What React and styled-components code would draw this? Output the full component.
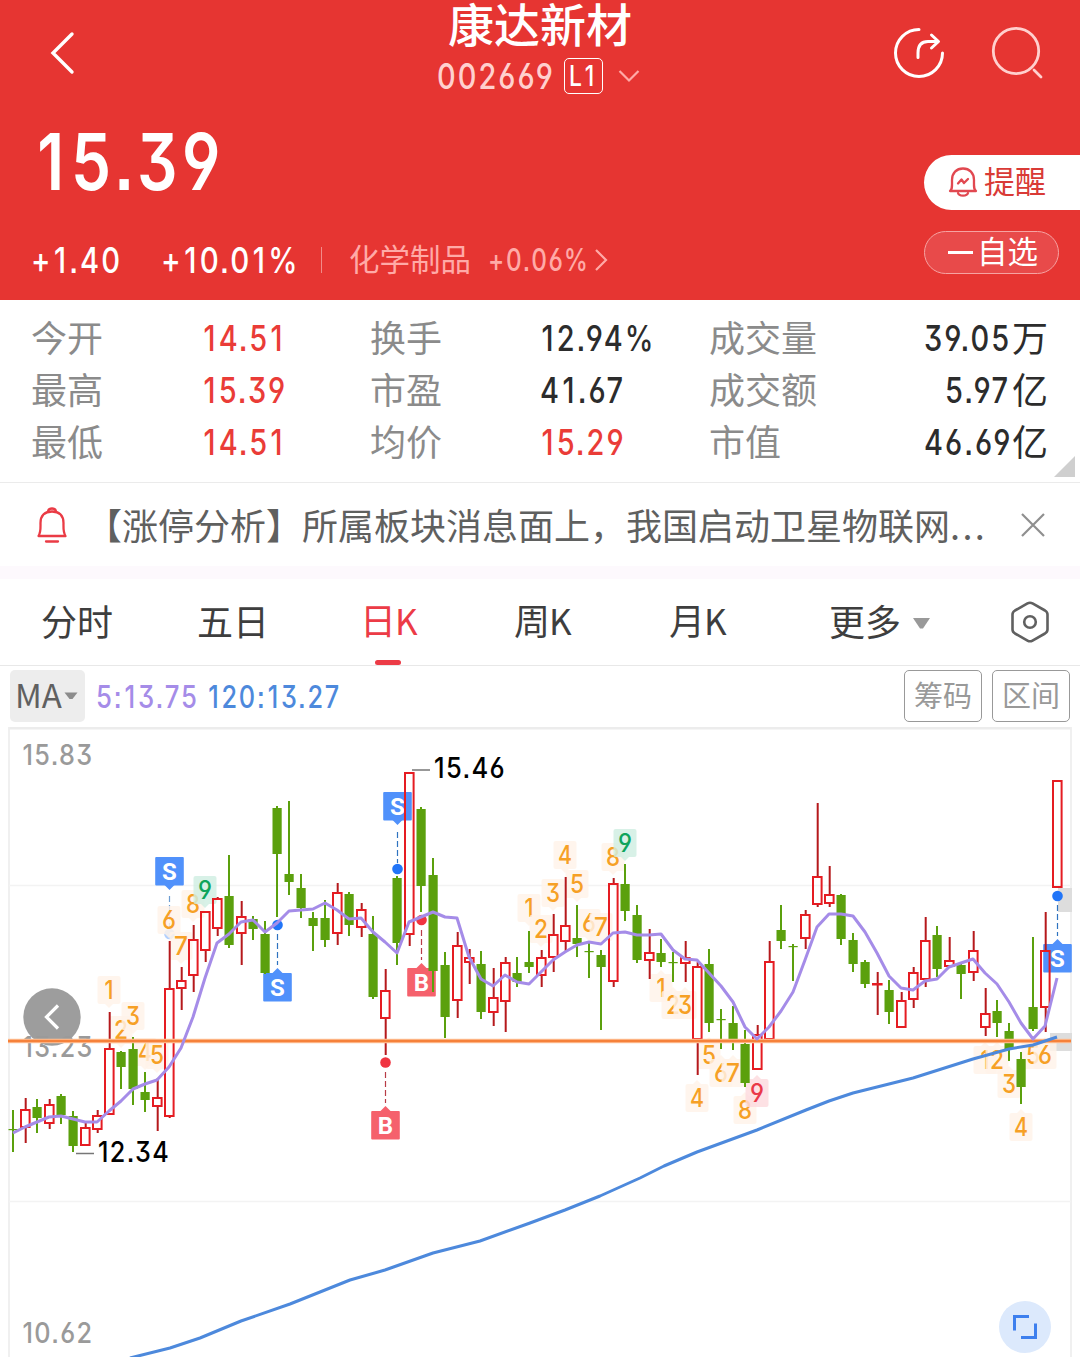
import React from "react";
import styled, { createGlobalStyle } from "styled-components";

const Global = createGlobalStyle`
  *, *::before, *::after { box-sizing: border-box; }
  html, body { margin: 0; padding: 0; background: #fff; }
  body { width: 1080px; height: 1357px; overflow: hidden; font-family: Inter, "Noto Sans CJK SC", sans-serif; }
  svg { display: block; }
`;

const Screen = styled.main`
  width: 1080px;
  height: 1357px;
  display: flex;
  flex-direction: column;
  overflow: hidden;
  background: #fff;
`;

/* Condensed figures with a flat-topped three, open six and nine, and square points. */
const NumBox = styled.span`
  display: inline-block;
  width: ${(p) => p.$w}px;
  font-family: Inter, "Noto Sans CJK SC", sans-serif;
  font-size: ${(p) => p.$size || 35.5}px;
  font-weight: ${(p) => p.$weight || 500};
  font-feature-settings: "cv03", "cv04", "cv09", "ss07";
  letter-spacing: 0.07em;
  color: ${(p) => p.$color || "inherit"};
  white-space: nowrap;
  transform: scaleX(${(p) => p.$scale || 0.815});
  transform-origin: left center;
`;

/* The one is narrower than the other figures, so it gets room on both sides. */
const One = styled.span`
  padding: 0 0.04em 0 0.05em;
`;

function Num({ children, ...rest }) {
  return (
    <NumBox {...rest}>
      {[...children].map((c, i) => (c === "1" ? <One key={i}>1</One> : c))}
    </NumBox>
  );
}

/* ---------- header ---------- */
const Header = styled.header`
  height: 300px;
  flex: none;
  background: #e63532;
  color: #fff;
  display: flex;
  flex-direction: column;
`;

const TopBar = styled.div`
  height: 106px;
  display: grid;
  grid-template-columns: 1fr auto 1fr;
  align-items: center;
  padding: 0 37px 0 50px;
`;

const TopSide = styled.div`
  display: flex;
  justify-content: ${(p) => (p.$end ? "flex-end" : "flex-start")};
  gap: 46px;
  padding-top: 3px;
`;

const TitleBlock = styled.div`
  display: flex;
  flex-direction: column;
  align-items: center;
  align-self: start;
  margin-right: 13px;
`;

const StockName = styled.h1`
  margin: 0;
  font: 500 46px/44px "Noto Sans CJK SC", sans-serif;
`;

const CodeRow = styled.div`
  display: flex;
  align-items: center;
  height: 36px;
  margin: 14px 4px 0 0;
  color: #ffd0ce;
`;

const LevelBadge = styled.span`
  width: 39px;
  height: 36px;
  margin: 0 15px 0 11px;
  border: 1.5px solid #fff;
  border-radius: 5px;
  color: #fff;
  display: flex;
  align-items: center;
  justify-content: center;
`;

const Quote = styled.div`
  flex: 1;
  display: flex;
  justify-content: space-between;
`;

const QuoteMain = styled.div`
  display: flex;
  flex-direction: column;
  padding-left: 31px;
`;

const Price = styled.div`
  height: 118px;
  line-height: 119px;
  padding-left: 3px;
`;

const ChangeRow = styled.div`
  display: flex;
  align-items: center;
  height: 80px;
`;

const Divider = styled.i`
  width: 1px;
  height: 26px;
  margin: 0 27px 0 26px;
  background: #f28b88;
`;

const Sector = styled.span`
  display: flex;
  align-items: center;
  gap: 17px;
  color: #ffaaa7;
  font: 400 30.5px/38px "Noto Sans CJK SC", sans-serif;
`;

const SectorName = styled.span`
  padding-bottom: 4px;
`;

const SectorArrow = styled.svg`
  margin-left: 8px;
`;

const Actions = styled.div`
  width: 156px;
  padding-top: 53px;
  display: flex;
  flex-direction: column;
  gap: 21px;
`;

const AlertButton = styled.button`
  height: 55px;
  border: 0;
  padding: 0 0 1px 24px;
  border-radius: 28px 0 0 28px;
  background: #fff;
  color: #d93a36;
  display: flex;
  align-items: center;
  gap: 6px;
  font: 400 31px/40px "Noto Sans CJK SC", sans-serif;
`;

const PillText = styled.span`
  padding-bottom: ${(p) => p.$lift || 0}px;
`;

const WatchButton = styled.button`
  width: 135px;
  height: 43px;
  border: 1px solid #f6a3a2;
  border-radius: 22px;
  background: #e84a4a;
  color: #fff;
  padding: 0 0 0 23px;
  display: flex;
  align-items: center;
  gap: 4px;
  font: 400 30.5px/34px "Noto Sans CJK SC", sans-serif;
`;

const Minus = styled.i`
  width: 25px;
  height: 3px;
  background: #fff;
`;

/* ---------- statistics ---------- */
const Stats = styled.section`
  flex: none;
  height: 183px;
  border-bottom: 1px solid #ebebeb;
  padding: 13px 5px 0 31px;
  display: grid;
  grid-template-columns: 171px 168px 170px 169px 215px 124px 27px;
  grid-template-rows: repeat(3, 52px);
`;

const Label = styled.span`
  font: 400 36px/46px "Noto Sans CJK SC", sans-serif;
  color: #8b8b8b;
  white-space: nowrap;
`;

const Value = styled.span`
  display: flex;
  align-items: flex-start;
  height: 52px;
  line-height: 52px;
  color: ${(p) => (p.$up ? "#ea3c37" : "#2c2c2c")};
  white-space: nowrap;
  justify-self: ${(p) => (p.$end ? "end" : "start")};
`;

const Unit = styled.span`
  font: 400 36px/46px "Noto Sans CJK SC", sans-serif;
`;

const Corner = styled.svg`
  grid-column: 7;
  grid-row: 3;
  align-self: end;
  justify-self: end;
  margin-bottom: -8px;
`;

/* ---------- news ---------- */
const News = styled.section`
  flex: none;
  height: 83px;
  display: flex;
  align-items: center;
  padding: 0 34px 0 36px;
`;

const NewsText = styled.p`
  margin: 0 0 0 18px;
  flex: 0 0 934px;
  font: 400 36px/52px "Noto Sans CJK SC", sans-serif;
  padding-bottom: 2px;
  color: #5f605f;
  white-space: nowrap;
`;

const Dots = styled.span`
  letter-spacing: 2.4px;
`;

const Band = styled.div`
  flex: none;
  height: 13px;
  background: #fdf9fd;
`;

/* ---------- period tabs ---------- */
const Tabs = styled.nav`
  flex: none;
  height: 87px;
  border-bottom: 1px solid #e8e8e8;
  padding: 0 31px 0 41px;
  display: grid;
  grid-template-columns: 156px 163px 154px 155px 160px 182px 38px;
`;

const Tab = styled.a`
  display: flex;
  flex-direction: column;
  align-items: flex-start;
  justify-content: flex-end;
  font: 400 36px/52px "Noto Sans CJK SC", sans-serif;
  color: ${(p) => (p.$active ? "#ec3b46" : "#3e3e3e")};
`;

const Underline = styled.i`
  width: 26px;
  height: 5px;
  margin: 14px 0 0 15px;
  border-radius: 3px;
  background: ${(p) => (p.$active ? "#ec3b46" : "transparent")};
`;

const Latin = styled.span`
  margin-left: -1px;
  font-size: 35px;
`;

const MoreRow = styled.span`
  display: flex;
  align-items: center;
  gap: 11px;

  svg { margin-top: 6px; }
`;

const Settings = styled.div`
  display: flex;
  align-items: center;
`;

/* ---------- indicator bar ---------- */
const Indicators = styled.div`
  flex: none;
  height: 61px;
  padding: 4px 10px 0;
  display: flex;
  align-items: flex-start;
`;

const MaPicker = styled.button`
  width: 75px;
  height: 52px;
  padding: 0 0 0 5px;
  border: 0;
  border-radius: 5px;
  background: #ededed;
  color: #606060;
  display: flex;
  align-items: center;
  gap: 2px;
  font: 400 33px/48px "Noto Sans CJK SC", sans-serif;
`;

const MaName = styled.span`
  padding-bottom: 4px;
`;

const Averages = styled.div`
  flex: 1;
  display: flex;
  align-items: center;
  gap: 11px;
  height: 52px;
  padding-left: 11px;
`;

const Chip = styled.button`
  width: 78px;
  height: 52px;
  margin-left: 10px;
  padding: 0 0 4px;
  border: 1.5px solid #999;
  border-radius: 5px;
  background: #fff;
  color: #999;
  font: 400 29px/44px "Noto Sans CJK SC", sans-serif;
`;

const Chart = styled.svg`
  flex: none;
  width: 1080px;
  height: 630px;

  text { font-feature-settings: "cv03", "cv04", "cv09", "ss07"; }
`;

/* ---------- chart data ---------- */
// [rising, high, body top, body bottom, low] in chart units, one entry per day
const candles = [
  [0,1110,1129,1131,1152],[1,1098,1110,1127,1143],[0,1099,1107,1118,1133],[1,1099,1105,1123,1129],
  [0,1094,1096,1115,1124],[0,1111,1116,1146,1152],[1,1122,1128,1145,1145],[1,1110,1116,1129,1133],
  [1,1012,1049,1114,1114],[0,1051,1052,1067,1089],[0,1037,1049,1089,1105],[0,1072,1092,1100,1112],
  [1,1078,1098,1106,1131],[1,941,989,1116,1118],[1,967,981,988,1010],[1,925,940,975,992],
  [1,912,912,950,962],[1,897,899,928,936],[0,855,896,945,948],[1,901,917,933,965],
  [0,916,919,929,940],[0,921,934,973,974],[0,806,808,854,917],[0,801,874,882,895],
  [0,874,888,908,918],[0,912,918,926,951],[0,900,918,940,947],[1,883,893,933,945],
  [0,892,894,925,936],[1,903,910,927,937],[0,916,934,997,999],[1,969,991,1018,1055],
  [0,876,878,943,965],[1,773,773,934,946],[0,807,809,886,912],[0,858,875,971,992],
  [0,952,965,1017,1038],[1,932,946,1000,1018],[1,949,958,962,984],[0,951,964,1012,1019],
  [1,968,998,1012,1026],[1,957,963,1001,1032],[0,957,973,982,987],[0,931,962,967,973],
  [1,950,958,975,987],[1,914,935,957,972],[1,877,926,941,952],[0,905,938,944,957],
  [0,943,951,952,978],[0,950,955,967,1030],[1,878,884,981,987],[0,864,884,911,921],
  [0,905,915,960,963],[1,929,953,960,979],[0,939,953,962,967],[0,952,962,963,982],
  [1,941,958,963,982],[1,962,967,1039,1075],[0,949,964,1023,1032],[0,1009,1019,1020,1049],
  [0,1006,1023,1043,1050],[0,1030,1044,1083,1087],[1,1025,1035,1069,1069],[1,941,962,1039,1042],
  [0,905,930,941,949],[0,944,946,947,981],[1,910,915,938,949],[1,803,877,904,907],
  [1,866,895,903,907],[0,894,895,939,945],[0,933,940,964,972],[0,960,962,984,988],
  [1,972,984,984,1015],[0,980,990,1012,1024],[1,992,1001,1027,1027],[1,967,973,999,1008],
  [1,917,941,979,987],[0,926,935,969,977],[1,937,961,966,966],[0,962,965,974,999],
  [1,931,951,972,981],[1,988,1014,1027,1036],[0,1000,1011,1023,1037],[0,1023,1031,1049,1061],
  [0,1052,1059,1087,1104],[0,937,1007,1029,1031],[1,912,951,1007,1032],[1,781,781,887,887],
];

const ma5 = [
  1133,1127,1122,1117,1116,1119,1122,1122,1111,1101,1089,1084,1080,1067,1048,1017,978,943,934,922,920,932,
  923,911,910,909,903,910,919,918,932,942,953,922,917,912,917,918,957,979,986,975,982,984,972,960,952,945,
  942,944,933,932,935,935,934,950,959,960,973,986,1002,1027,1039,1027,1011,992,960,927,914,914,916,932,953,
  976,988,990,981,979,967,963,959,973,984,1002,1023,1039,1026,978,
];

const ma120 =
  "130,1358 170,1348 200,1338 241,1321 290,1304 350,1280 385,1270 433,1253 480,1241 530,1223 565,1210 600,1196 640,1178 664,1166 697,1152 757,1130 806,1110 829,1101 853,1093 913,1078 973,1059 1009,1049 1033,1045 1057,1037";

const dayX = (i) => 13 + 12 * i;

// [x, digit centre y, digit, pointer direction, tone]
const counts = [
  [109,990,1,1],[121,1030,2,1],[133,1016,3,1],[145,1052,4,1],[157,1055,5,1],[169,920,6,1],[181,946,7,1],[193,904,8,1],[205,890,9,1,"green"],
  [529,908,1,1],[541,929,2,1],[553,893,3,1],[565,855,4,1],[577,884,5,1],[589,923,6,1],[601,927,7,1],[613,857,8,1],[625,843,9,1,"green"],
  [661,988,1,-1],[673,1005,2,-1],[685,1005,3,-1],[697,1098,4,-1],[709,1055,5,-1],[721,1073,6,-1],[733,1073,7,-1],[745,1110,8,-1],[757,1093,9,-1,"pink"],
  [985,1060,1,-1],[997,1060,2,-1],[1009,1084,3,-1],[1021,1127,4,-1],[1033,1055,5,-1],[1045,1055,6,-1],
];
const tones = {
  orange: ["#fff3e9", "#f6a025"],
  green: ["#cfeee2", "#0fa45c"],
  pink: ["#fddade", "#ea3848"],
};

// [letter, x, box top, pointer direction, dot y, dash from, dash to, faded]
const signals = [
  ["S",169.5,857,1,934,896,930,true],
  ["S",277.5,973,-1,925,934,965],
  ["S",397.5,792,1,869,832,863],
  ["B",421.5,968,-1,920,930,960],
  ["B",385.5,1111,-1,1062.5,1072,1103],
  ["S",1057.5,944,-1,896,905,936],
];

function CountTag({ x, y, n, dir, tone = "orange" }) {
  const [bg, fg] = tones[tone];
  const tip = y + dir * 18;
  const edge = y + dir * 14;
  const w = n === 1 ? 9 : 14;
  return (
    <g>
      <rect x={x - 11.5} y={y - 14} width="23" height="28" rx="2" fill={bg} opacity=".82" />
      <path d={`M${x - 4} ${edge}L${x} ${tip}L${x + 4} ${edge}Z`} fill={bg} opacity=".82" />
      <text x={x - w / 2} y={y + 9} fontSize="25.5" fontWeight="500" fill={fg} textLength={w} lengthAdjust="spacingAndGlyphs">{n}</text>
    </g>
  );
}

function Signal({ data }) {
  const [letter, x, top, dir, dot, from, to, faded] = data;
  const sell = letter === "S";
  const box = sell ? "#5091fb" : "#f5616c";
  const edge = dir > 0 ? top + 28 : top;
  return (
    <g>
      <line x1={x} x2={x} y1={from} y2={to} stroke={sell ? "#2f73c0" : "#b83c46"} strokeWidth="1.2" strokeDasharray="6 3" opacity={faded ? 0.7 : 1} />
      <circle cx={x} cy={dot} r="5.3" fill={sell ? "#2175f8" : "#f03440"} opacity={faded ? 0.35 : 1} />
      <rect x={x - 14.3} y={top} width="28.6" height="28.6" rx="1" fill={box} />
      <path d={`M${x - 5} ${edge}L${x} ${edge + dir * 5}L${x + 5} ${edge}Z`} fill={box} />
      <text x={x} y={top + 22.5} textAnchor="middle" fontFamily="Roboto, sans-serif" fontSize="24" fontWeight="700" fill="#fff">{letter}</text>
    </g>
  );
}

function Candle({ x, data }) {
  const [up, high, top, bottom, low] = data;
  if (!up) {
    const flat = bottom - top < 3;
    return (
      <g fill="#5ba00d">
        <rect x={x - 1} y={high} width="2" height={low - high} />
        <rect x={x - 4.5} y={top} width="9.2" height={flat ? 1.2 : bottom - top} />
      </g>
    );
  }
  const cx = x + 0.7;
  return (
    <g>
      {top > high && <rect x={cx - 1} y={high} width="2" height={top - high} fill="#b5191c" />}
      {low > bottom && <rect x={cx - 1} y={bottom} width="2" height={low - bottom} fill="#b5191c" />}
      <rect x={x - 4} y={top} width="8.6" height={Math.max(bottom - top, 0.5)} fill="none" stroke="#e51c22" strokeWidth="2" />
    </g>
  );
}

function ScaleText({ x, y, w, children }) {
  return <text x={x} y={y} letterSpacing="1.5" textLength={w} lengthAdjust="spacingAndGlyphs">{children}</text>;
}

function KChart() {
  return (
    <Chart viewBox="0 727 1080 630" fontFamily="Inter, sans-serif">
      <path d="M8 728H1071" stroke="#ececec" strokeWidth="3" />
      <path d="M9 727V1357M1071 727V1357" stroke="#efefef" strokeWidth="1.8" />
      <path d="M9 885.5H1071M9 1201.5H1071" stroke="#f3f3f3" strokeWidth="1.5" />
      <circle cx="52" cy="1017" r="28.7" fill="#9d9d9d" />
      <path d="M58 1005.5L46.5 1017L58 1028.5" fill="none" stroke="#fff" strokeWidth="3.2" />
      <g fontSize="28" fontWeight="500" fill="#9a9a9a">
        <ScaleText x="22.5" y="765" w="71">15.83</ScaleText>
        <ScaleText x="22.5" y="1057" w="71">13.23</ScaleText>
        <ScaleText x="22.5" y="1343" w="71">10.62</ScaleText>
      </g>
      <rect x="1058" y="888" width="14" height="24" fill="#ddd" />
      <rect x="1050" y="1033" width="22" height="18" fill="#ddd" />
      {signals.map((s, i) => <Signal key={i} data={s} />)}
      {counts.map(([x, y, n, dir, tone], i) => <CountTag key={i} x={x} y={y} n={n} dir={dir} tone={tone} />)}
      {candles.map((c, i) => <Candle key={i} x={dayX(i)} data={c} />)}
      <path d="M8 1041H1071" stroke="#ffc59c" strokeWidth="4.4" />
      <path d="M8 1041H1071" stroke="#f6813a" strokeWidth="2.6" />
      <polyline points={ma120} fill="none" stroke="#4d89dc" strokeWidth="3" strokeLinejoin="round" />
      <polyline points={ma5.map((y, i) => `${dayX(i)},${y}`).join(" ")} fill="none" stroke="#a58ce8" strokeWidth="3" strokeLinejoin="round" />
      <path d="M412 770H430M76 1153.5H94" stroke="#777" strokeWidth="1.6" />
      <g fontSize="28.5" fontWeight="500" fill="#000">
        <ScaleText x="434" y="778" w="72">15.46</ScaleText>
        <ScaleText x="98" y="1162" w="72">12.34</ScaleText>
      </g>
      <circle cx="1025" cy="1327" r="26" fill="#dce9fc" />
      <path d="M1029 1316.5H1014.5V1330.5M1035.5 1323.5V1337.5H1021" fill="none" stroke="#3d7fee" strokeWidth="3" />
    </Chart>
  );
}

const BackIcon = () => (
  <svg width="26" height="44" viewBox="0 0 26 44" fill="none" stroke="#fff" strokeWidth="3.4" strokeLinecap="round">
    <path d="M22 3L3 22L22 41" />
  </svg>
);

const ShareIcon = () => (
  <svg width="52" height="54" viewBox="0 0 52 54" fill="none" stroke="#fff" strokeWidth="3" strokeLinecap="round" strokeLinejoin="round">
    <path d="M26 3.5A23.5 23.5 0 1 0 49.5 27" />
    <path d="M25 31.5V27C25 19 29 15.5 35 15.5H44.5M38.5 9L45.5 15.5L38.5 22" />
  </svg>
);

const SearchIcon = () => (
  <svg width="52" height="54" viewBox="0 0 52 54" fill="none" stroke="#ffd0ce" strokeWidth="2.8" strokeLinecap="round">
    <circle cx="25" cy="25" r="22.7" />
    <path d="M43 44L50 51" />
  </svg>
);

const AlertIcon = () => (
  <svg width="30" height="32" viewBox="0 0 30 32" fill="none" stroke="#e14850" strokeWidth="2.3" strokeLinejoin="round" strokeLinecap="round">
    <path d="M2 25C4.5 23.5 4 20 4 14C4 7 8.5 2.5 15 2.5S26 7 26 14C26 20 25.5 23.5 28 25Z" />
    <path d="M10 27C11 30.5 19 30.5 20 27M10 17.5L13.5 13.5L16 17L20 13" />
  </svg>
);

const BellIcon = () => (
  <svg width="32" height="38" viewBox="0 0 32 38" fill="none" stroke="#ea3b45" strokeWidth="2.3" strokeLinejoin="round" strokeLinecap="round">
    <path d="M2.5 30C5 26 4.5 22 4.5 17C4.5 9.5 9 5.5 16 5.5S27.5 9.5 27.5 17C27.5 22 27 26 29.5 30Z" />
    <path d="M12 5.5C12.5 1.5 19.5 1.5 20 5.5M10 35.5H22" />
  </svg>
);

const stats = [
  ["今开", "14.51", true, "换手", "12.94%", false, "成交量", "39.05", "万", 88],
  ["最高", "15.39", true, "市盈", "41.67", false, "成交额", "5.97", "亿", 67],
  ["最低", "14.51", true, "均价", "15.29", true, "市值", "46.69", "亿", 88],
];

const tabs = [["分时"], ["五日"], ["日", "K", true], ["周", "K"], ["月", "K"]];

export default function App() {
  return (
    <Screen>
      <Global />
      <Header>
        <TopBar>
          <TopSide><BackIcon /></TopSide>
          <TitleBlock>
            <StockName>康达新材</StockName>
            <CodeRow>
              <Num $size={35.5} $w={116}>002669</Num>
              <LevelBadge><Num $size={28} $w={29}>L1</Num></LevelBadge>
              <svg width="22" height="14" viewBox="0 0 22 14" fill="none" stroke="#ffaaa7" strokeWidth="2.2">
                <path d="M1.5 2L11 11.5L20.5 2" />
              </svg>
            </CodeRow>
          </TitleBlock>
          <TopSide $end><ShareIcon /><SearchIcon /></TopSide>
        </TopBar>
        <Quote>
          <QuoteMain>
            <Price><Num $size={78} $w={190} $weight={600}>15.39</Num></Price>
            <ChangeRow>
              <Num $w={88} $scale={0.82}>+1.40</Num>
              <Num $w={134} $scale={0.83} style={{ marginLeft: 42 }}>+10.01%</Num>
              <Divider />
              <Sector>
                <SectorName>化学制品</SectorName>
                <Num $size={31} $w={98} $scale={0.785}>+0.06%</Num>
              </Sector>
              <SectorArrow width="14" height="24" viewBox="0 0 14 24" fill="none" stroke="#ffaaa7" strokeWidth="2.2">
                <path d="M2 2L12 12L2 22" />
              </SectorArrow>
            </ChangeRow>
          </QuoteMain>
          <Actions>
            <AlertButton><AlertIcon /><PillText $lift={4}>提醒</PillText></AlertButton>
            <WatchButton><Minus /><PillText $lift={6}>自选</PillText></WatchButton>
          </Actions>
        </Quote>
      </Header>

      <Stats>
        {stats.map(([a, av, aUp, b, bv, bUp, c, cv, unit, w], i) => (
          <React.Fragment key={a}>
            <Label>{a}</Label>
            <Value $up={aUp}><Num $w={88}>{av}</Num></Value>
            <Label>{b}</Label>
            <Value $up={bUp}><Num $w={88}>{bv}</Num></Value>
            <Label>{c}</Label>
            <Value $end><Num $w={w}>{cv}</Num><Unit>{unit}</Unit></Value>
            {i < 2 && <span />}
          </React.Fragment>
        ))}
        <Corner width="21" height="21" viewBox="0 0 21 21"><path d="M21 0V21H0Z" fill="#cfcfcf" /></Corner>
      </Stats>

      <News>
        <BellIcon />
        <NewsText>【涨停分析】所属板块消息面上，我国启动卫星物联网<Dots>...</Dots></NewsText>
        <svg width="26" height="26" viewBox="0 0 26 26" stroke="#8f8f8f" strokeWidth="2.2">
          <path d="M2 2L24 24M24 2L2 24" />
        </svg>
      </News>
      <Band />

      <Tabs>
        {tabs.map(([name, latin, active]) => (
          <Tab key={name} $active={active}>
            <span>{name}{latin && <Latin>{latin}</Latin>}</span>
            <Underline $active={active} />
          </Tab>
        ))}
        <Tab>
          <MoreRow>
            更多
            <svg width="19" height="13" viewBox="0 0 19 13"><path d="M1 1H18L11 11.5H8Z" fill="#999" /></svg>
          </MoreRow>
          <Underline />
        </Tab>
        <Settings>
          <svg width="38" height="42" viewBox="0 0 38 42" fill="none" stroke="#606060" strokeWidth="2.6" strokeLinejoin="round">
            <path d="M16.5 2.4Q19 1 21.5 2.4L34 9.5Q36.5 11 36.5 13.5V28.5Q36.5 31 34 32.5L21.5 39.6Q19 41 16.5 39.6L4 32.5Q1.5 31 1.5 28.5V13.5Q1.5 11 4 9.5Z" />
            <circle cx="19" cy="21" r="5.8" />
          </svg>
        </Settings>
      </Tabs>

      <Indicators>
        <MaPicker>
          <MaName>MA</MaName>
          <svg width="14" height="8" viewBox="0 0 14 8"><path d="M0.5 0.5H13.5L8.5 7H5.5Z" fill="#8c8c8c" /></svg>
        </MaPicker>
        <Averages>
          <Num $size={31} $w={100} $scale={0.83} $color="#a58ce8">5:13.75</Num>
          <Num $size={31} $w={132} $color="#4d89dc">120:13.27</Num>
        </Averages>
        <Chip>筹码</Chip>
        <Chip>区间</Chip>
      </Indicators>
      <KChart />
    </Screen>
  );
}
